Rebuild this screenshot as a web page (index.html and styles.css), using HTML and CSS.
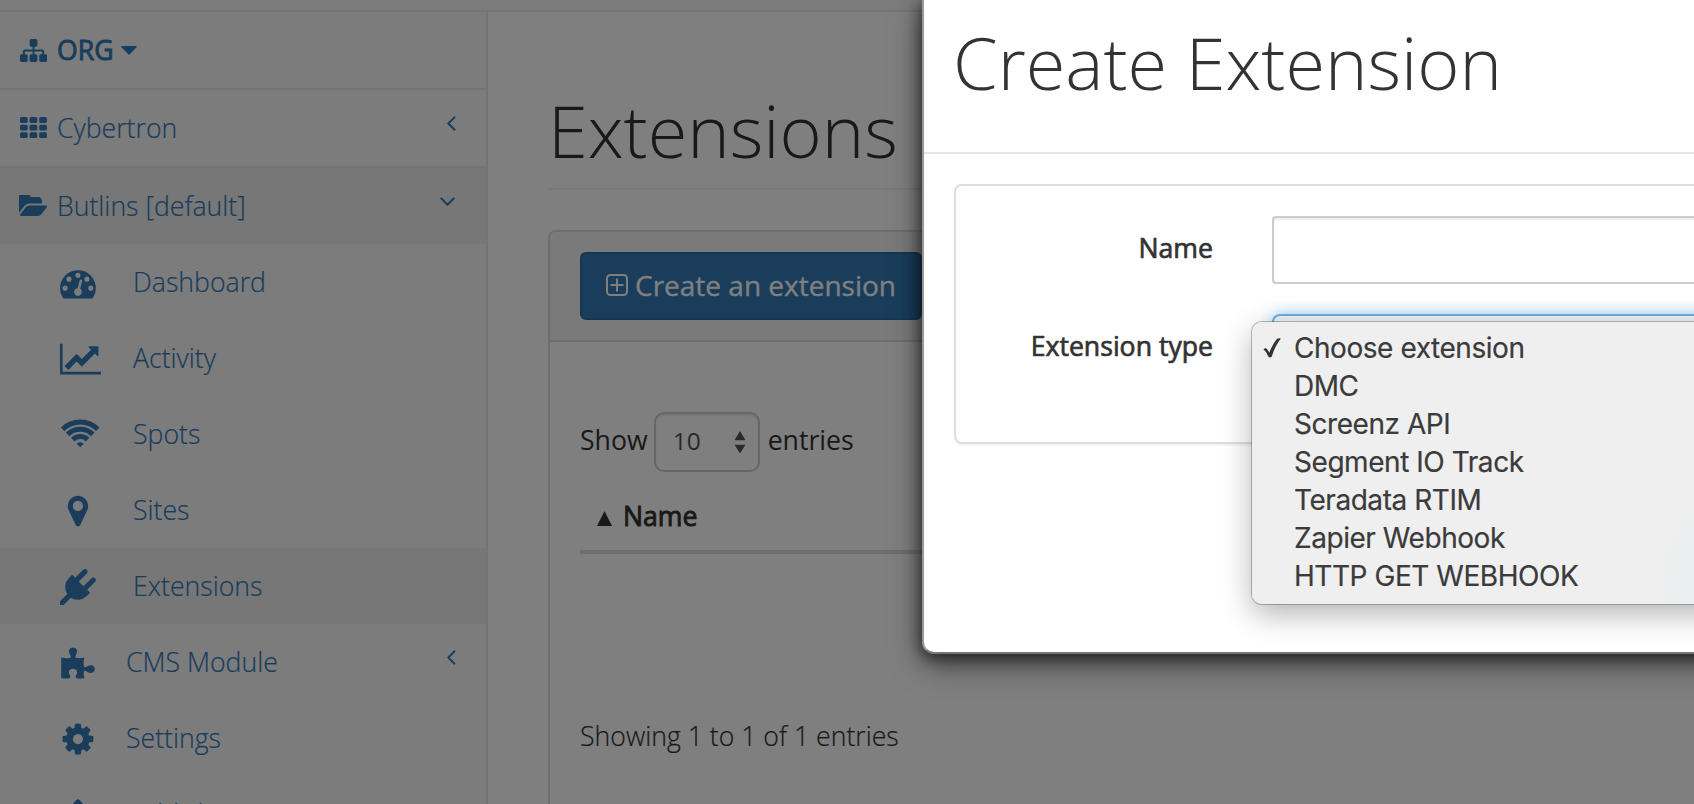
FILE: index.html
```html
<!DOCTYPE html>
<html lang="en">
<head>
<meta charset="utf-8">
<title>Extensions</title>
<link rel="stylesheet" href="styles.css">
</head>
<body>
<div class="page">
  <div class="topbar"></div>
  <div class="columns">
    <nav class="sidebar">
      <a class="top org"><svg class="ti sitemap" viewBox="0 128 1792 1536" preserveAspectRatio="none"><path d="M1792 1248v320q0 40-28 68t-68 28h-320q-40 0-68-28t-28-68v-320q0-40 28-68t68-28h96v-192h-512v192h96q40 0 68 28t28 68v320q0 40-28 68t-68 28h-320q-40 0-68-28t-28-68v-320q0-40 28-68t68-28h96v-192h-512v192h96q40 0 68 28t28 68v320q0 40-28 68t-68 28h-320q-40 0-68-28t-28-68v-320q0-40 28-68t68-28h96v-192q0-52 38-90t90-38h512v-192h-96q-40 0-68-28t-28-68v-320q0-40 28-68t68-28h320q40 0 68 28t28 68v320q0 40-28 68t-68 28h-96v192h512q52 0 90 38t38 90v192h96q40 0 68 28t28 68z"/></svg><span class="label">ORG</span><svg class="caret" viewBox="0 0 16 9"><path d="M.8 0h14.400q1 .3.3 1.200L8.800 8.200q-.8.700-1.600 0L.5 1.200Q-.2.300.8 0z"/></svg></a>
      <a class="top"><svg class="ti" viewBox="0 0 27 21"><g><rect width="7.700" height="6" rx="1.500"/><rect x="9.600" width="7.700" height="6" rx="1.500"/><rect x="19.200" width="7.700" height="6" rx="1.500"/><rect y="7.700" width="7.700" height="5.700" rx="1.500"/><rect x="9.600" y="7.700" width="7.700" height="5.700" rx="1.500"/><rect x="19.200" y="7.700" width="7.700" height="5.700" rx="1.500"/><rect y="15.200" width="7.700" height="5.800" rx="1.500"/><rect x="9.600" y="15.200" width="7.700" height="5.800" rx="1.500"/><rect x="19.200" y="15.200" width="7.700" height="5.800" rx="1.500"/></g></svg><span class="label">Cybertron</span><svg class="chev" viewBox="0 0 9 15"><path d="M8 .8L1.300 7.500L8 14.200"/></svg></a>
      <a class="top open"><svg class="ti folder" viewBox="0 256 1879 1280" preserveAspectRatio="none"><path d="M1879 952q0 31-31 66l-336 396q-43 51-120.500 86.500t-143.500 35.500h-1088q-34 0-60.500-13t-26.500-43q0-31 31-66l336-396q43-51 120.500-86.500t143.500-35.500h1088q34 0 60.500 13t26.500 43zm-343-344v160h-832q-94 0-197 47.500t-164 119.500l-337 396-5 6q0-4-.5-12.500t-.5-12.500v-960q0-92 66-158t158-66h320q92 0 158 66t66 158v32h544q92 0 158 66t66 158z"/></svg><span class="label">Butlins [default]</span><svg class="chev down" viewBox="0 0 15 9"><path d="M.8 1L7.500 7.700L14.200 1"/></svg></a>

      <a class="sub"><svg viewBox="0 0 2048 1792"><path fill-rule="evenodd" d="M1792 1152q0 261-141 483-19 29-54 29h-1402q-35 0-54-29-141-221-141-483 0-182 71-348t191-286 286-191 348-71 348 71 286 191 191 286 71 348zM384 1152a128 128 0 1 0-256 0 128 128 0 1 0 256 0zM576 704a128 128 0 1 0-256 0 128 128 0 1 0 256 0zM1024 512a128 128 0 1 0-256 0 128 128 0 1 0 256 0zM1472 704a128 128 0 1 0-256 0 128 128 0 1 0 256 0zM1664 1152a128 128 0 1 0-256 0 128 128 0 1 0 256 0zM1004 1185l101-382q6-26-7.500-48.500t-38.500-29.500-48 6.500-30 39.500l-101 382q-60 5-107 43.500t-63 98.500q-20 77 20 146t117 89 146-20 89-117q16-60-6-117t-72-91z"/></svg><span class="label">Dashboard</span></a>
      <a class="sub"><svg viewBox="0 0 2048 1792"><path d="M2048 1536v128h-2048v-1536h128v1408h1920zm-128-1248v435q0 21-19.500 29.500t-35.500-7.500l-121-121-633 633q-10 10-23 10t-23-10l-233-233-416 416-192-192 585-585q10-10 23-10t23 10l233 233 464-464-121-121q-16-16-7.500-35.500t29.500-19.500h435q14 0 23 9t9 23z"/></svg><span class="label">Activity</span></a>
      <a class="sub"><svg class="wifi" viewBox="0 0 41 36"><path d="M2.600 12.200A25 25 0 0 1 37.800 12.200M7.600 17.400A18 18 0 0 1 32.800 17.400M12.800 22.600A10.600 10.600 0 0 1 27.600 22.600"/><path class="dot" d="M20.200 30.200L16.700 26.700Q20.200 23.800 23.700 26.700z"/></svg><span class="label">Spots</span></a>
      <a class="sub"><svg viewBox="0 0 2048 1792"><path d="M1152 640q0-106-75-181t-181-75-181 75-75 181 75 181 181 75 181-75 75-181zm256 0q0 109-33 179l-364 774q-16 33-47.500 52t-67.500 19-67.500-19-46.500-52l-365-774q-33-70-33-179 0-212 150-362t362-150 362 150 150 362z"/></svg><span class="label">Sites</span></a>
      <a class="sub active"><svg viewBox="0 0 2048 1792"><path d="M1755 453q37 38 37 90.500t-37 90.500l-401 400 150 150-160 160q-163 163-389.500 186.500t-411.500-100.500l-362 362h-181v-181l362-362q-124-185-100.500-411.500t186.500-389.500l160-160 150 150 400-401q38-37 91-37t90 37 37 90.500-37 90.500l-400 401 234 234 401-400q38-37 91-37t90 37z"/></svg><span class="label">Extensions</span></a>
      <a class="sub near"><svg viewBox="0 0 41 36"><path d="M1.200 12.500Q6 13.600 9.800 12.900C11.300 12.500 10.800 10.500 9.800 9.200C7.600 5.500 9.800 2.400 13 2.400S18.400 5.500 16.200 9.200C15.200 11 15 12.600 16.500 12.900Q20 13.300 24.300 12.400Q23.400 17 23.700 20.500C24 22.600 25.300 22.600 27 21.500C30.500 19 34.800 20 34.800 24S30.500 29 27 26.700C25 25.300 23.700 25.600 23.700 28Q23.600 31 24.600 33Q20 34.200 16.800 33.300C15.200 32.700 15.400 31.300 16.400 29.800C18.300 26.500 16.300 23.700 13 23.700S7.700 26.500 9.600 29.800C10.600 31.500 10.800 32.800 9.300 33.300Q5.500 34 1.200 33z"/></svg><span class="label">CMS Module</span><svg class="chev" viewBox="0 0 9 15"><path d="M8 .8L1.300 7.500L8 14.200"/></svg></a>
      <a class="sub near"><svg viewBox="0 0 2048 1792"><path d="M1152 896q0-106-75-181t-181-75-181 75-75 181 75 181 181 75 181-75 75-181zm512-109v222q0 12-8 23t-20 13l-185 28q-19 54-39 91 35 50 107 138 10 12 10 25t-9 23q-27 37-99 108t-94 71q-12 0-26-9l-138-108q-44 23-91 38-16 136-29 186-7 28-36 28h-222q-14 0-24.500-8.500t-11.500-21.500l-28-184q-49-16-90-37l-141 107q-10 9-25 9-14 0-25-11-126-114-165-168-7-10-7-23 0-12 8-23 15-21 51-66.500t54-70.500q-27-50-41-99l-183-27q-13-2-21-12.500t-8-23.500v-222q0-12 8-23t19-13l186-28q14-46 39-92-40-57-107-138-10-12-10-24 0-10 9-23 26-36 98.500-107.500t94.500-71.500q13 0 26 10l138 107q44-23 91-38 16-136 29-186 7-28 36-28h222q14 0 24.500 8.500t11.500 21.500l28 184q49 16 90 37l142-107q9-9 24-9 13 0 25 10 129 119 165 170 7 8 7 22 0 12-8 23-15 21-51 66.500t-54 70.500q26 50 41 98l183 28q13 2 21 12.500t8 23.500z"/></svg><span class="label">Settings</span></a>
      <a class="sub near"><svg viewBox="0 0 41 36"><path d="M16.500 3Q18 1.600 19.500 3L33 17.500H3z"/></svg><span class="label">Publish</span></a>
    </nav>
    <main class="content">
      <h1>Extensions</h1>
      <section class="panel">
        <header class="panel-head"><button class="btn"><svg viewBox="0 0 22 22"><rect x="1" y="1" width="20" height="20" rx="3.500"/><path d="M11 4.500v13M4.500 11h13"/></svg><span>Create an extension</span></button></header>
        <div class="panel-body">
          <div class="length"><span class="show">Show</span><span class="select"><span>10</span><svg viewBox="0 0 12 23"><path d="M6 0L11.500 9.300H.5zM6 22.500L11.500 13.700H.5z"/></svg></span><span class="entries">entries</span></div>
          <div class="th"><svg viewBox="0 0 15 15"><path d="M7.500 0L15 15H0z"/></svg><span>Name</span></div>
          <div class="info"><span>Showing 1 to 1 of 1 entries</span></div>
        </div>
      </section>
    </main>
  </div>
</div>
<div class="backdrop"></div>
<div class="modal">
  <h2>Create Extension</h2>
  <div class="form">
    <div class="row"><label>Name</label><div class="input"></div></div>
    <div class="row second"><label>Extension type</label><div class="input focus"></div></div>
  </div>
</div>
<ul class="menu">
  <li><svg viewBox="0 0 18 20"><path d="M.5 11.600Q2.500 9 4.500 11.800L6.300 14.500Q10 5.500 14 .8Q16.500 -.4 17.900 .6Q12 8 8.800 18.500Q7 20.500 5.300 18.500Q4 14 .5 11.600z"/></svg><span>Choose extension</span></li>
  <li><span>DMC</span></li>
  <li><span>Screenz API</span></li>
  <li><span>Segment IO Track</span></li>
  <li><span>Teradata RTIM</span></li>
  <li><span>Zapier Webhook</span></li>
  <li><span>HTTP GET WEBHOOK</span></li>
</ul>
</body>
</html>
```
FILE: styles.css
```css
* { box-sizing: border-box; }
html, body { margin: 0; height: 804px; overflow: hidden; }
body { font: 300 26.65px/40px "Open Sans", sans-serif; color: #333; background: #fff; }
.page { height: 804px; overflow: hidden; }
.topbar { height: 12px; background: #f8f8f8; border-bottom: 2px solid #e7e7e7; }
.columns { display: flex; height: 792px; }

.sidebar { width: 488px; flex: none; height: 792px; overflow: hidden; background: #f8f8f8; border-right: 2px solid #e7e7e7; color: #337ab7; }
.sidebar a { display: flex; }
.sidebar svg { fill: currentColor; flex: none; }
.top { height: 78px; border-bottom: 2px solid #e7e7e7; padding: 17px 0 0 20px; }
.top.open { background: #eee; border-bottom: 0; height: 76px; }
.label { padding-top: 1px; -webkit-text-stroke: .2px currentColor; }
.top .label { margin-left: 10px; }
.ti { width: 27px; height: 21px; margin-top: 10px; }
.ti.sitemap { height: 23px; }
.ti.folder { width: 28px; margin-left: -1px; }
.org .label { -webkit-text-stroke: .9px currentColor; font-weight: 400; }
.caret { width: 16px; height: 9px; margin: 17px 0 0 7px; }
.sidebar .chev { width: 9px; height: 15px; fill: none; stroke: currentColor; stroke-width: 2; margin: 9px 30px 0 auto; }
.sidebar .chev.down { width: 15px; height: 9px; margin: 12px 31px 0 auto; }
.sub { height: 76px; padding: 17px 0 0 60px; }
.sub > svg:first-child { width: 41px; height: 36px; margin: 4px 32px 0 0; }
.sub.near > svg:first-child { margin-right: 25px; }
.sub.active { background: #eee; }
.sidebar .wifi { fill: none; stroke: currentColor; stroke-width: 5; }
.wifi .dot { fill: currentColor; stroke: none; }

.content { flex: 1; min-width: 0; padding: 78px 0 0 60px; }
h1, h2 { font-size: 72px; line-height: 80px; font-weight: 300; margin: 0; }
h1 { height: 100px; border-bottom: 2px solid #eee; }
.panel { margin-top: 40px; height: 620px; border: 2px solid #ddd; border-right: 0; border-radius: 8px 0 0 8px; overflow: hidden; }
.panel-head { height: 110px; background: #f5f5f5; border-bottom: 2px solid #ddd; padding: 20px 30px; }
.btn { display: flex; width: 342px; height: 68px; padding: 11px 0 0 24px; background: #337ab7; border: 2px solid #2e6da4; border-radius: 6px; color: #fff; font: 400 28px/40px "Open Sans", sans-serif; white-space: nowrap; -webkit-text-stroke: .3px currentColor; }
.btn svg { width: 22px; height: 22px; margin: 9px 7px 0 0; fill: none; stroke: #fff; stroke-width: 2; }
.panel-body { padding: 70px 0 0 30px; }
.length { display: flex; height: 60px; font-weight: 400; }
.length > span { margin-top: 8px; }
.length > .select { display: flex; width: 106px; height: 60px; margin: 0 8px 0 6px; padding: 7px 12px 0 17px; border: 2px solid #ccc; border-radius: 10px; box-shadow: inset 0 2px 2px rgba(0,0,0,.075); font-size: 24.5px; color: #555; justify-content: space-between; }
.select svg { width: 12px; height: 23px; fill: #555; margin-top: 10px; }
.th { display: flex; height: 82px; padding: 24px 0 0 17px; border-bottom: 4px solid #ddd; font-weight: 400; -webkit-text-stroke: .9px currentColor; }
.th svg { width: 15px; height: 15px; fill: #333; margin: 15px 11px 0 0; stroke: none; }
.info { margin-top: 162px; -webkit-text-stroke: .2px currentColor; }

.backdrop { position: absolute; inset: 0; height: 804px; background: rgba(0,0,0,.5); }
.modal { position: absolute; left: 922px; right: -60px; top: 0; height: 654px; background: #fff; border: solid #999; border-width: 0 0 2px 2px; border-bottom-color: #777; border-radius: 0 0 0 12px; box-shadow: 0 10px 30px rgba(0,0,0,.5), 0 3px 16px rgba(0,0,0,.6); }
.modal h2 { height: 154px; padding: 22px 0 0 29px; border-bottom: 2px solid #e5e5e5; }
.form { margin: 30px 0 0 30px; height: 260px; border: 2px solid #ddd; border-right: 0; border-radius: 8px 0 0 8px; padding-top: 30px; box-shadow: 0 2px 2px rgba(0,0,0,.05); }
.row { display: flex; height: 98px; }
.row label { width: 257px; flex: none; text-align: right; margin: 12px 59px 0 0; font-weight: 400; -webkit-text-stroke: .7px currentColor; }
.input { flex: 1; height: 68px; border: 2px solid #ccc; border-right: 0; border-radius: 4px 0 0 4px; box-shadow: inset 0 2px 2px rgba(0,0,0,.075); }
.input.focus { border-color: #66afe9; border-radius: 8px 0 0 8px; background: #f0f0f0; box-shadow: 0 0 16px rgba(102,175,233,.6); }
.menu { position: absolute; left: 1252px; right: -60px; top: 322px; height: 282px; margin: 0; padding: 7px 0 0; list-style: none; background: radial-gradient(circle at 500px 260px, #e0f0f0 0, #efefef 100px); border-radius: 10px 0 0 10px; box-shadow: 0 0 0 1px rgba(0,0,0,.25), 0 10px 30px rgba(0,0,0,.3); font: 400 28px/38px Inter, sans-serif; letter-spacing: -.45px; color: #3b3b3b; -webkit-text-stroke: .2px currentColor; }
.menu li { display: flex; height: 38px; padding-left: 11px; }
.menu li svg { width: 18px; height: 20px; fill: #333; margin-top: 9px; }
.menu li span { margin-left: 31px; }
.menu li svg + span { margin-left: 13px; }
```
